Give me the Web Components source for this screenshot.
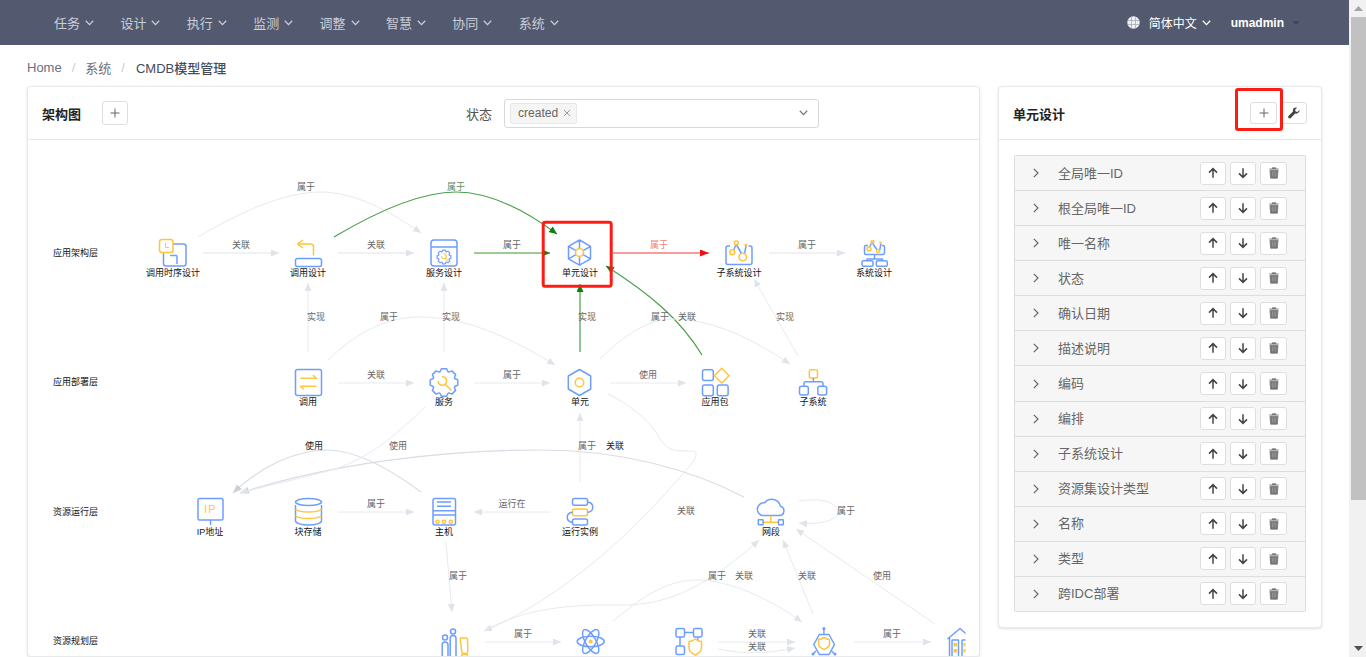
<!DOCTYPE html>
<html lang="zh">
<head>
<meta charset="utf-8">
<title>CMDB模型管理</title>
<style>
  html, body { margin: 0; height: 657px; overflow: hidden; background: #fff; }
  body { font: 13px "Liberation Sans", "Noto Sans CJK SC", sans-serif; color: #555; }
  .shell { display: flex; height: 657px; }
  .page { width: 1349px; flex: none; }
  .content { display: flex; gap: 18px; padding: 0 27px; align-items: flex-start; }
  .status { display: flex; align-items: center; gap: 12px; margin-left: 338px; }
  .tools { display: flex; gap: 4px; }
  .mark-wrap { position: relative; }
  .title-gap { display: flex; align-items: center; gap: 21px; }
</style>
</head>
<body>
<div class="shell">
  <div class="page">
    <top-nav></top-nav>
    <bread-crumb></bread-crumb>
    <div class="content">
      <panel-card style="width:953px">
        <div slot="title" class="title-gap">架构图 <tool-button icon="plus" style="width:26px;height:24px"></tool-button></div>
        <div slot="tools" class="status"><span>状态</span><status-select></status-select></div>
        <graph-view></graph-view>
      </panel-card>
      <panel-card style="width:324px" spread padded>
        <span slot="title">单元设计</span>
        <div slot="tools" class="tools mark-wrap">
          <tool-button icon="plus" style="width:27px;height:22px"></tool-button>
          <tool-button icon="wrench" style="width:26px;height:22px"></tool-button>
          <red-mark></red-mark>
        </div>
        <field-list>
          <field-row>全局唯一ID</field-row>
          <field-row>根全局唯一ID</field-row>
          <field-row>唯一名称</field-row>
          <field-row>状态</field-row>
          <field-row>确认日期</field-row>
          <field-row>描述说明</field-row>
          <field-row>编码</field-row>
          <field-row>编排</field-row>
          <field-row>子系统设计</field-row>
          <field-row>资源集设计类型</field-row>
          <field-row>名称</field-row>
          <field-row>类型</field-row>
          <field-row>跨IDC部署</field-row>
        </field-list>
      </panel-card>
    </div>
  </div>
  <fake-scrollbar></fake-scrollbar>
</div>

<script>
const chevron = (color) => `<svg width="9" height="6" viewBox="0 0 9 6"><path d="M.8 .8 4.5 4.6 8.2 .8" fill="none" stroke="${color}" stroke-width="1.3"/></svg>`;

class TopNav extends HTMLElement {
  constructor() {
    super();
    this.shadowDOM = this.attachShadow({mode: 'open'});
  }

  connectedCallback() {
    const menus = ['任务', '设计', '执行', '监测', '调整', '智慧', '协同', '系统'];
    this.shadowDOM.innerHTML = `
      <style>
        :host { display: flex; height: 45px; background: #535a6f; align-items: center; padding-left: 54px; color: #c9ced8; font-size: 13px; }
        .item { display: flex; align-items: center; gap: 5px; width: 66.4px; flex: none; }
        .right { margin-left: auto; display: flex; align-items: center; color: #fff; font-size: 12px; padding-right: 49px; }
        .lang { display: flex; align-items: center; gap: 5px; margin: 0 20px 0 9px; }
        .user { font-weight: bold; letter-spacing: 0; }
        .caret { width: 0; height: 0; border: 4px solid transparent; border-top: 4px solid #3f4659; border-bottom: 0; margin-left: 8px; }
      </style>
      ${menus.map(m => `<div class="item"><span>${m}</span>${chevron('#c9ced8')}</div>`).join('')}
      <div class="right">
        <svg width="13" height="13" viewBox="0 0 13 13"><circle cx="6.5" cy="6.5" r="6.2" fill="#eef0f4"/><path d="M.5 4.5h12M.5 8.5h12M4.5 .5v12M8.5 .5v12" stroke="#9aa1b0" stroke-width=".7"/></svg>
        <div class="lang"><span>简体中文</span>${chevron('#fff')}</div>
        <span class="user">umadmin</span><span class="caret"></span>
      </div>
    `;
  }
}
customElements.define('top-nav', TopNav);

class BreadCrumb extends HTMLElement {
  constructor() {
    super();
    this.shadowDOM = this.attachShadow({mode: 'open'});
    this.shadowDOM.innerHTML = `
      <style>
        :host { display: flex; height: 41px; align-items: center; gap: 10px; padding: 3px 27px 0; box-sizing: border-box; font-size: 13px; color: #6b7080; }
        .sep { color: #ccc; margin: 0 0 0 0; }
        .now { color: #454b5c; font-weight: 500; margin-left: 1px; }
      </style>
      <span>Home</span><span class="sep">/</span><span>系统</span><span class="sep">/</span><span class="now">CMDB模型管理</span>
    `;
  }
}
customElements.define('bread-crumb', BreadCrumb);

class PanelCard extends HTMLElement {
  constructor() {
    super();
    this.shadowDOM = this.attachShadow({mode: 'open'});
  }

  connectedCallback() {
    const spread = this.hasAttribute('spread');
    const padded = this.hasAttribute('padded');
    this.shadowDOM.innerHTML = `
      <style>
        :host { display: block; flex: none; box-sizing: border-box; background: #fff; border: 1px solid #e8e9eb; border-radius: 4px; box-shadow: 0 1px 3px rgba(0,0,0,.12); }
        header { display: flex; align-items: center; height: 53px; box-sizing: border-box; border-bottom: 1px solid #e6e6e6; padding: 0 14px; ${spread ? 'justify-content: space-between;' : ''} }
        .title { font-weight: bold; color: #222; font-size: 13px; ${spread ? '' : ''} }
        .body { ${padded ? 'padding: 15px;' : ''} }
      </style>
      <header><div class="title"><slot name="title"></slot></div><slot name="tools"></slot></header>
      <div class="body"><slot></slot></div>
    `;
  }
}
customElements.define('panel-card', PanelCard);

const icons = {
  plus: '<path d="M6 1.5v9M1.5 6h9" stroke="#666" stroke-width="1" fill="none"/>',
  wrench: '<path d="M11.6 3.1 9.4 5 7.6 4.6 7.1 2.8 9 .7C7.4.1 5.5.8 5 2.4c-.2.7-.2 1.4 0 2L.7 8.8c-.7.7-.7 1.6-.1 2.2s1.6.6 2.2-.1L7.2 6.500c2 .7 4.500-.9 4.400-3.400z" fill="#444"/>',
  up: '<path d="M6 10.800V1.800M2 5.600 6 1.600l4 4" stroke="#444" stroke-width="1.500" fill="none"/>',
  down: '<path d="M6 1.200v9M2 6.400l4 4 4-4" stroke="#444" stroke-width="1.500" fill="none"/>',
  trash: '<path d="M2 3.200h8l-.6 8H2.600zM1.200 2h9.600M4.200 2V.8h3.600V2" fill="#777" stroke="#777" stroke-width=".8"/><path d="M4.500 4.500v5M6 4.500v5M7.500 4.500v5" stroke="#aaa" stroke-width=".5"/>'
};

class ToolButton extends HTMLElement {
  constructor() {
    super();
    this.shadowDOM = this.attachShadow({mode: 'open'});
  }

  connectedCallback() {
    this.shadowDOM.innerHTML = `
      <style>
        :host { display: inline-flex; align-items: center; justify-content: center; box-sizing: border-box; background: #fff; border: 1px solid #dedede; border-radius: 3px; flex: none; }
        svg { display: block; }
      </style>
      <svg width="12" height="12" viewBox="0 0 12 12">${icons[this.getAttribute('icon')]}</svg>
    `;
  }
}
customElements.define('tool-button', ToolButton);

class RedMark extends HTMLElement {
  constructor() {
    super();
    this.attachShadow({mode: 'open'}).innerHTML = `
      <style>
        :host { position: absolute; left: -15px; top: -14px; width: 48px; height: 43px; box-sizing: border-box; border: 3px solid #fb1c14; border-radius: 3px; pointer-events: none; }
      </style>
    `;
  }
}
customElements.define('red-mark', RedMark);

class StatusSelect extends HTMLElement {
  constructor() {
    super();
    this.attachShadow({mode: 'open'}).innerHTML = `
      <style>
        :host { display: flex; align-items: center; justify-content: space-between; width: 315px; height: 29px; box-sizing: border-box; border: 1px solid #d9d9d9; border-radius: 3px; padding: 0 10px 0 5px; }
        .tag { display: flex; align-items: center; gap: 5px; height: 21px; box-sizing: border-box; background: #f5f5f5; border: 1px solid #e8e8e8; border-radius: 2px; padding: 0 5px 0 7px; font-size: 12px; color: #666; }
      </style>
      <div class="tag"><span>created</span><svg width="8" height="8" viewBox="0 0 8 8"><path d="M1 1l6 6M7 1 1 7" stroke="#999" stroke-width="1"/></svg></div>
      ${chevron('#777')}
    `;
  }
}
customElements.define('status-select', StatusSelect);

class FieldList extends HTMLElement {
  constructor() {
    super();
    this.attachShadow({mode: 'open'}).innerHTML = `
      <style>
        :host { display: block; border: 1px solid #ddd; border-bottom: 0; border-radius: 2px; }
      </style>
      <slot></slot>
    `;
  }
}
customElements.define('field-list', FieldList);

class FieldRow extends HTMLElement {
  constructor() {
    super();
    this.attachShadow({mode: 'open'}).innerHTML = `
      <style>
        :host { display: flex; align-items: center; height: 35.080px; box-sizing: border-box; background: #f6f6f6; border-bottom: 1px solid #ddd; padding: 0 18px 0 18px; color: #666; font-size: 13px; }
        .arrow { width: 6px; height: 10px; flex: none; margin-right: 19px; }
        .name { flex: 1; margin-top: -2px; }
        .btns { display: flex; gap: 4px; }
      </style>
      <svg class="arrow" viewBox="0 0 6 10"><path d="M.8 .8 5 5 .8 9.200" fill="none" stroke="#666" stroke-width="1.200"/></svg>
      <div class="name"><slot></slot></div>
      <div class="btns">
        <tool-button icon="up" style="width:26px;height:23px"></tool-button>
        <tool-button icon="down" style="width:26px;height:23px"></tool-button>
        <tool-button icon="trash" style="width:27px;height:23px"></tool-button>
      </div>
    `;
  }
}
customElements.define('field-row', FieldRow);

class FakeScrollbar extends HTMLElement {
  constructor() {
    super();
    this.attachShadow({mode: 'open'}).innerHTML = `
      <style>
        :host { display: flex; flex-direction: column; width: 17px; flex: none; height: 657px; background: #f1f1f1; align-items: flex-end; }
        .btn { width: 15px; height: 17px; display: flex; align-items: center; justify-content: center; flex: none; }
        .thumb { width: 15px; height: 483px; background: #c1c1c1; flex: none; }
        .space { flex: 1; }
      </style>
      <div class="btn"><svg width="9" height="5" viewBox="0 0 9 5"><path d="M4.500 0 9 5H0z" fill="#a3a3a3"/></svg></div>
      <div class="thumb"></div>
      <div class="space"></div>
      <div class="btn"><svg width="9" height="5" viewBox="0 0 9 5"><path d="M0 0h9L4.500 5z" fill="#505050"/></svg></div>
    `;
  }
}
customElements.define('fake-scrollbar', FakeScrollbar);

// gear outline, used by the two service icons
function gear(cx, cy, R, r, n) {
  const pts = [];
  const step = Math.PI * 2 / n;
  for (let i = 0; i < n; i++) {
    const a = i * step - Math.PI / 2;
    [[-.3, r], [-.16, R], [.16, R], [.3, r]].forEach(([o, rad]) => {
      pts.push((cx + Math.cos(a + o * step * 1.5) * rad).toFixed(1) + ' ' + (cy + Math.sin(a + o * step * 1.5) * rad).toFixed(1));
    });
  }
  return 'M' + pts.join('L') + 'Z';
}

const shield = (x, y, w, h) => `M${x + w / 2} ${y}C${x + w * .7} ${y + h * .12} ${x + w * .85} ${y + h * .16} ${x + w} ${y + h * .16}V${y + h * .55}C${x + w} ${y + h * .8} ${x + w * .7} ${y + h * .93} ${x + w / 2} ${y + h}C${x + w * .3} ${y + h * .93} ${x} ${y + h * .8} ${x} ${y + h * .55}V${y + h * .16}C${x + w * .15} ${y + h * .16} ${x + w * .3} ${y + h * .12} ${x + w / 2} ${y}Z`;

const subTop = (dy) => `
  <circle class="y" cx="732.300" cy="${253.300 + dy}" r="2.500"/><circle class="y" cx="742.700" cy="${258 + dy}" r="3.800"/>
  <circle class="y" cx="736.300" cy="${244 + dy}" r="2"/><circle cx="746" cy="${246 + dy}" r="1.500" fill="#ffc53d"/>`;

const ICONS = `
  <rect class="b" x="163.500" y="245" width="22.500" height="22" rx="2.500"/>
  <path class="b" d="M170 256.500h6a1 1 0 0 1 1 1v7.500"/>
  <rect class="y w" x="159.500" y="240.500" width="13.500" height="13" rx="2.500"/>
  <path class="y" d="M165.500 244v4.500h3.500" style="stroke-width:1"/>

  <path class="y" d="M303 241 297.500 245 303 249M298 245h12.500q3 0 3 3v8.500"/>
  <rect class="b" x="295.500" y="259.500" width="26" height="8" rx="2"/>

  <rect class="b" x="431" y="241" width="26" height="26" rx="3"/>
  <path class="b" d="M431 248h26"/>
  <path class="b" d="${gear(444, 258, 7, 5.500, 8)}" style="stroke-width:1.200"/>
  <path class="y" d="M443.500 254.800A2.400 2.400 0 1 1 441.500 257.200M445 259l2.800 2.800" style="stroke-width:1.200"/>

  <path class="b" d="M579.500 241 590.500 247.300V259.900L579.500 266.200 568.500 259.900V247.300ZM579.500 241V266.200M568.500 247.300 590.500 259.900M590.500 247.300 568.500 259.900"/>
  <circle class="y w" cx="579.500" cy="253.500" r="4"/>

  <path class="b" d="M730 247h-2a2 2 0 0 0-2 2v14.500a2 2 0 0 0 2 2h22a2 2 0 0 0 2-2V249a2 2 0 0 0-2-2h-1.500"/>
  <path class="b w0" d="M733.500 251 736.300 245.500 741.500 254.500M744.500 254.800 746 247"/>
  ${subTop(0)}

  <path class="b" d="M868 246.500h-2a1.500 1.500 0 0 0-1.500 1.500v6a1.500 1.500 0 0 0 1.500 1.500h17a1.500 1.500 0 0 0 1.500-1.500v-6a1.500 1.500 0 0 0-1.500-1.500h-1"/>
  <path class="b" d="M869.500 248 872 243.500 877.500 251.500M879.500 252 881 244.500M874.500 255.500v4.500M867 262v-2h15.500v2"/>
  <rect class="b" x="862" y="261.800" width="11" height="5.500" rx="1.500"/><rect class="b" x="876.300" y="261.800" width="11" height="5.500" rx="1.500"/>
  <circle class="y" cx="869" cy="250" r="2"/><circle class="y" cx="872.500" cy="243" r="1.500"/><circle class="y w" cx="878" cy="252" r="1.500"/><circle cx="880.500" cy="243.800" r="1.200" fill="#ffc53d"/>

  <rect class="b" x="295.500" y="370.500" width="26" height="26" rx="2"/>
  <path class="y" d="M300.500 379.300h16l-3.500-3M316.500 387.300h-16l3.500 3"/>

  <path class="b" d="${gear(444, 383.500, 14, 11.500, 8)}"/>
  <path class="y" d="M441.800 377.700A4.300 4.300 0 1 1 438 382M445.500 385.500l6 6"/>

  <path class="b" d="M579.500 370.500 590.700 377V390L579.500 396.500 568.300 390V377Z"/>
  <circle class="y" cx="579.500" cy="383.500" r="4.300"/>

  <rect class="b" x="702.500" y="370.700" width="10.800" height="10.800" rx="2"/>
  <path class="y" d="M721.700 369.300 729 376.700 721.700 384 714.400 376.700Z"/>
  <rect class="b" x="702.500" y="386" width="10.800" height="10.800" rx="2"/><rect class="b" x="717.300" y="386" width="10.800" height="10.800" rx="2"/>

  <rect class="y" x="809.300" y="370.700" width="8.200" height="8.400" rx="1.500"/>
  <path class="b" d="M813.400 379v3.800M804 387.300v-2.500a2 2 0 0 1 2-2h15a2 2 0 0 1 2 2v2.500"/>
  <rect class="b" x="799.500" y="387.300" width="8.800" height="8.800" rx="2"/><rect class="b" x="817.800" y="387.300" width="8.800" height="8.800" rx="2"/>

  <rect class="b" x="198" y="499.500" width="25" height="21.500" rx="1.500"/>
  <path class="b" d="M210.500 521v5"/>
  <text class="ip" x="210.300" y="514.300">IP</text>

  <path class="b" d="M295.500 506v16c0 2.300 6 4 13 4s13-1.700 13-4v-16"/>
  <ellipse class="b" cx="308.500" cy="503" rx="13" ry="3.500"/>
  <path class="y" d="M295.500 510.500c3 2 8 2.500 13 2.500s10-.5 13-2.500M295.500 517c3 2 8 2.500 13 2.500s10-.5 13-2.500"/>

  <rect class="b" x="433" y="499.500" width="22.500" height="26.500" rx="2"/>
  <path class="b" d="M437 503h14M437 507.300h14M433 511.700h22.500M437 511.700h14M433 516h22.500"/>
  <circle class="y" cx="437.500" cy="522.800" r="1.600"/><circle class="y" cx="444" cy="522.800" r="1.600"/><circle class="y" cx="450.800" cy="522.800" r="1.600"/>

  <rect class="b" x="572.500" y="499.500" width="15" height="6.800" rx="2"/>
  <rect class="y" x="572.500" y="510" width="15" height="6.800" rx="2"/>
  <rect class="b" x="572.500" y="520" width="15" height="6" rx="2"/>
  <path class="b" d="M587.500 503c7 .5 7 10 0 10.300M572.500 513.300c-7 .5-7 9.500 0 10"/>

  <path class="b" d="M762 516.500h17.500a4.700 4.700 0 0 0 1-9.200 9 9 0 0 0-16-3.500 6.500 6.500 0 0 0-2.500 12.700Z" />
  <path class="y" d="M770.800 516.500v7M763 523.300h15.300"/>
  <rect class="b" x="758.300" y="520.800" width="4.800" height="5" rx=".5"/><rect class="b" x="778.500" y="520.800" width="4.800" height="5" rx=".5"/>

  <rect class="b" x="442.200" y="643" width="5.800" height="17" rx="2.900"/><circle class="b" cx="445" cy="638.600" r="2.500"/>
  <rect class="b" x="450.200" y="636.500" width="5.800" height="24" rx="2.900"/><circle class="b" cx="453" cy="632.500" r="2.500"/>
  <path class="y" d="M460.500 639h5.500a1.500 1.500 0 0 1 1.500 1.500l.3 12.500a1.500 1.500 0 0 1-1.500 1.500h-3a1.500 1.500 0 0 1-1.500-1.500l-1.500-12.500a1.300 1.300 0 0 1 .2-1.500Z"/>
  <rect class="y" x="461.500" y="655.500" width="6" height="2.500" rx="1.200"/>

  <g transform="translate(590.700 642.500)">
    <ellipse class="b" rx="13.500" ry="5.200"/><ellipse class="b" rx="13.500" ry="5.200" transform="rotate(60)"/><ellipse class="b" rx="13.500" ry="5.200" transform="rotate(-60)"/>
    <circle r="2" fill="#ffc53d"/>
  </g>

  <rect class="b" x="676" y="629.500" width="8.500" height="8.500" rx="1.500"/><rect class="b" x="693.500" y="629.500" width="8.500" height="8.500" rx="1.500"/>
  <rect class="b" x="676" y="647" width="8.500" height="8.500" rx="1.500"/>
  <path class="b" d="M684.500 633.500h9M680 638v9M697.700 638v4"/>
  <path class="y w" d="${shield(689, 640, 12.500, 16)}"/>

  <path class="b" d="M819.300 635.500h9.700l5.500 10-5.500 10h-9.700l-5.500-10Z"/>
  <path class="b" d="M823.900 629.500v6M816 652l-2.800 2.800M831.500 652l3 2.800"/>
  <circle cx="823.900" cy="629.500" r="1.500" fill="#6d9eff"/><circle cx="813" cy="655" r="1.500" fill="#6d9eff"/><circle cx="835" cy="655" r="1.500" fill="#6d9eff"/>
  <path class="y" d="${shield(818.500, 638.500, 11, 12)}"/>

  <g clip-path="url(#cutHouse)">
    <path class="b" d="M947.500 640 960 629.500 972 640M949.500 638.500V660"/>
    <rect class="b" x="952" y="641" width="6.500" height="20" rx=".5"/><rect class="b" x="962" y="641" width="6.500" height="20" rx=".5"/>
    <rect x="953.500" y="644" width="3.500" height="3.500" fill="#ffc53d"/><rect x="953.500" y="650" width="3.500" height="3.500" fill="#ffc53d"/>
    <rect x="963.500" y="644" width="3.500" height="3.500" fill="#ffc53d"/><rect x="963.500" y="650" width="3.500" height="3.500" fill="#ffc53d"/>
  </g>
`;

// [path, style]; a = faint gray, g = thin green, l = thick pale green, r = red
const EDGES = [
  ['M198 238C240 213 285 193 320 193C355 193 390 212 421 234', 'a'],
  ['M203 254H279', 's'], ['M338 254H414', 's'], ['M769 254H845', 's'],
  ['M334 238C376 213 421 193 456 193C491 193 526 212 557 235', 'g'],
  ['M474 254H550', 'l'],
  ['M613 254H709', 'r'],
  ['M308 353V284', 'a'], ['M444 353V284', 'a'],
  ['M580 353V285', 'g'],
  ['M702 356C680 320 650 295 606 267', 'g'],
  ['M328 361C360 330 390 318 420 318C465 318 510 338 555 366', 'a'],
  ['M600 360C625 335 650 320 672 320C710 320 750 338 790 365', 'a'],
  ['M798 357 754 280', 'a'],
  ['M338 384H414', 'a'], ['M474 384H550', 'a'], ['M610 384H686', 'a'],
  ['M338 513H414', 'a'], ['M550 513H474', 'a'],
  ['M580 483V414', 'a'],
  ['M421 493C390 470 355 451 327 451C295 451 260 468 233 494', 'd'],
  ['M744 498C690 470 620 451 540 451C440 451 330 465 240 494', 'd'],
  ['M425 408C400 432 372 458 335 470C300 480 265 487 240 494', 'a'],
  ['M608 395C625 403 650 420 660 440C668 452 675 452 692 452C700 453 695 462 687 470C640 525 580 585 500 625L484 632', 'a'],
  ['M484 632C520 612 560 605 620 606C670 607 710 585 759 541', 'a'],
  ['M613 622C640 600 665 581 697 581C730 581 770 600 802 623', 'a'],
  ['M813 615 783 541', 'a'],
  ['M935 625 796 530', 'a'],
  ['M799 502C825 498 838 505 838 513C838 521 820 526 799 524', 'a'],
  ['M446 543 452 613', 'a'],
  ['M485 643H561', 'a'], ['M718 643H795', 'a'], ['M718 650C745 656 770 654 795 649', 'a'],
  ['M854 643H931', 'a']
];

const LABELS = [
  ['属于', 306, 188], ['关联', 241, 246], ['关联', 376, 246], ['属于', 456, 188, '#5f8a5f'], ['属于', 512, 246],
  ['属于', 659, 246, '#f07f7f'], ['属于', 807, 246], ['实现', 316, 318], ['属于', 389, 318], ['实现', 451, 318],
  ['实现', 587, 318], ['属于', 660, 318], ['关联', 687, 318], ['实现', 785, 318],
  ['关联', 376, 376], ['属于', 512, 376], ['使用', 648, 376],
  ['使用', 314, 447, '#222'], ['使用', 398, 447], ['属于', 587, 447], ['关联', 615, 447, '#222'],
  ['属于', 376, 505], ['运行在', 512, 505], ['关联', 686, 512], ['属于', 846, 512],
  ['属于', 458, 577], ['属于', 717, 577], ['关联', 744, 577], ['关联', 807, 577], ['使用', 882, 577],
  ['属于', 523, 635], ['关联', 757, 635], ['关联', 757, 648], ['属于', 892, 635]
];

const NODES = [
  ['调用时序设计', 173, 274], ['调用设计', 308, 274], ['服务设计', 444, 274], ['单元设计', 580, 274], ['子系统设计', 739, 274], ['系统设计', 874, 274],
  ['调用', 308, 403], ['服务', 444, 403], ['单元', 580, 403], ['应用包', 715, 403], ['子系统', 813, 403],
  ['IP地址', 210, 533], ['块存储', 308, 533], ['主机', 444, 533], ['运行实例', 580, 533], ['网段', 771, 533]
];

const LAYERS = [['应用架构层', 254], ['应用部署层', 383], ['资源运行层', 513], ['资源规划层', 642]];

class GraphView extends HTMLElement {
  constructor() {
    super();
    this.shadowDOM = this.attachShadow({mode: 'open'});
  }

  connectedCallback() {
    const marker = (id, color, len) => `<marker id="${id}" markerUnits="userSpaceOnUse" markerWidth="${len}" markerHeight="7" refX="${len}" refY="3.500" orient="auto"><path d="M0 0 ${len} 3.500 0 7Z" fill="${color}"/></marker>`;
    const ends = {a: 'mGray', s: 'mGray', d: 'mDark', g: 'mGreen', l: 'mGreen', r: 'mRed'};
    this.shadowDOM.innerHTML = `
      <style>
        :host { display: block; height: 516px; overflow: hidden; }
        svg { display: block; font-family: "Liberation Sans", "Noto Sans CJK SC", sans-serif; font-size: 9px; }
        path, rect, circle, ellipse { stroke-linejoin: round; }
        .edge { fill: none; }
        .a { stroke: #e8eaef; stroke-width: 1; }
        .s { stroke: #f0f1f4; stroke-width: 2; }
        .d { stroke: #d8dce4; stroke-width: 1.200; }
        .g { stroke: #4c9e4c; stroke-width: 1.200; }
        .l { stroke: #9ccb93; stroke-width: 2; }
        .r { stroke: #f99c9c; stroke-width: 2; }
        .b { fill: none; stroke: #6d9eff; stroke-width: 1.500; }
        .y { fill: none; stroke: #ffc53d; stroke-width: 1.500; }
        .w { fill: #fff; }
        .ip { fill: #ffc53d; font-size: 11px; text-anchor: middle; letter-spacing: 1px; }
        .edge-label { fill: #666; text-anchor: middle; }
        .node-label { fill: #111; text-anchor: middle; }
        .layer { fill: #111; }
      </style>
      <svg width="951" height="516" viewBox="28 141 951 516">
        <defs>
          ${marker('mGray', '#dfe3ea', 8)}${marker('mDark', '#c9ced8', 9)}${marker('mGreen', '#0c820c', 8)}${marker('mRed', '#f01010', 9)}
          <clipPath id="cutHouse"><rect x="940" y="620" width="25.500" height="45"/></clipPath>
        </defs>
        ${EDGES.map(([d, k]) => `<path class="edge ${k}" d="${d}" marker-end="url(#${ends[k]})"/>`).join('')}
        ${LABELS.map(([t, x, y, c]) => `<text class="edge-label" x="${x}" y="${y + 3}"${c ? ` style="fill:${c}"` : ''}>${t}</text>`).join('')}
        ${ICONS}
        ${NODES.map(([t, x, y]) => `<text class="node-label" x="${x}" y="${y + 3}">${t}</text>`).join('')}
        ${LAYERS.map(([t, y]) => `<text class="layer" x="53" y="${y + 3}">${t}</text>`).join('')}
        <rect x="543.200" y="223.200" width="68" height="64" rx="2" fill="none" stroke="#fb1c14" stroke-width="3"/>
      </svg>
    `;
  }
}
customElements.define('graph-view', GraphView);
</script>
</body>
</html>
